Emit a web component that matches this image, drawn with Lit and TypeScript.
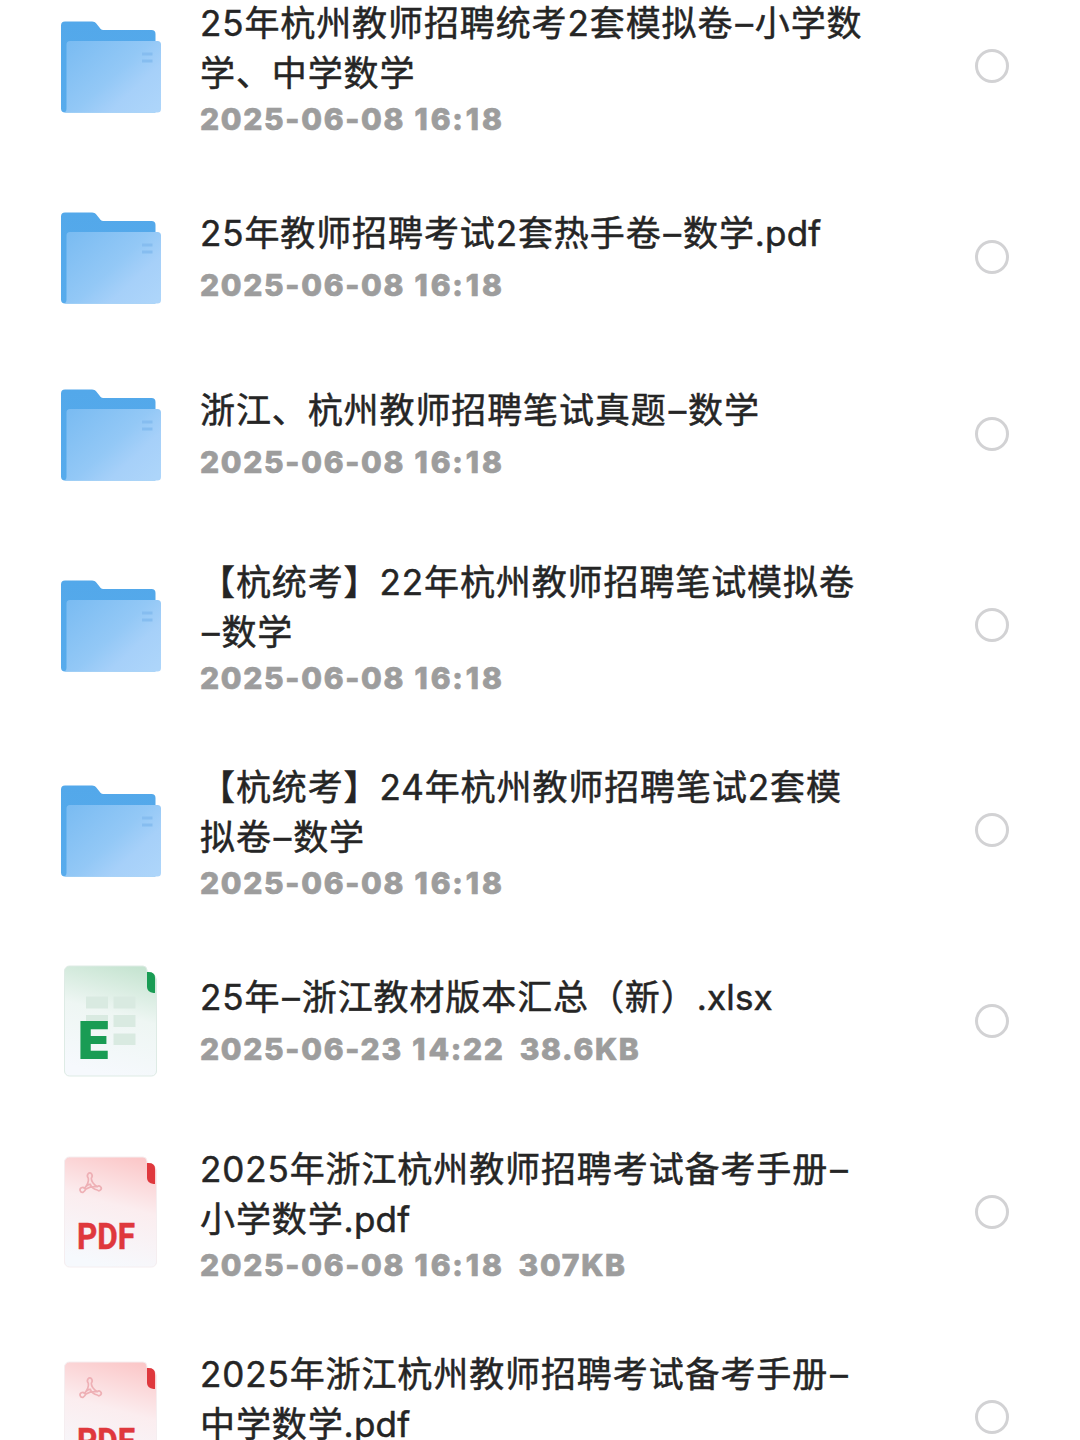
import { LitElement, html, svg, css } from "lit";
import { customElement, property } from "lit/decorators.js";

type Kind = "folder" | "sheet" | "pdf";

interface FileItem {
  kind: Kind;
  lines: string[];
  date: string;
  size?: string;
}

const FILES: FileItem[] = [
  { kind: "folder", lines: ["25年杭州教师招聘统考2套模拟卷–小学数", "学、中学数学"], date: "2025-06-08 16:18" },
  { kind: "folder", lines: ["25年教师招聘考试2套热手卷–数学.pdf"], date: "2025-06-08 16:18" },
  { kind: "folder", lines: ["浙江、杭州教师招聘笔试真题–数学"], date: "2025-06-08 16:18" },
  { kind: "folder", lines: ["【杭统考】22年杭州教师招聘笔试模拟卷", "–数学"], date: "2025-06-08 16:18" },
  { kind: "folder", lines: ["【杭统考】24年杭州教师招聘笔试2套模", "拟卷–数学"], date: "2025-06-08 16:18" },
  { kind: "sheet", lines: ["25年–浙江教材版本汇总（新）.xlsx"], date: "2025-06-23 14:22", size: "38.6KB" },
  { kind: "pdf", lines: ["2025年浙江杭州教师招聘考试备考手册–", "小学数学.pdf"], date: "2025-06-08 16:18", size: "307KB" },
  { kind: "pdf", lines: ["2025年浙江杭州教师招聘考试备考手册–", "中学数学.pdf"], date: "2025-06-08 16:18" },
];

@customElement("file-icon")
export class FileIcon extends LitElement {
  @property() kind: Kind = "folder";

  static styles = css`
    :host { display: block; width: 104px; height: 120px; }
    svg { display: block; }
    .pdf { font: 700 36px Roboto, sans-serif; fill: #df383d; stroke: #df383d; stroke-width: 0.5px; }
    .sheet { font: 900 52px Inter, sans-serif; fill: #199c54; }
  `;

  private folder() {
    return svg`
      <defs>
        <linearGradient id="front" x1="0" y1="0.1" x2="1" y2="0.9">
          <stop offset="0" stop-color="#7bbcf2" />
          <stop offset="0.5" stop-color="#93c8f6" />
          <stop offset="0.72" stop-color="#a6d0f9" />
          <stop offset="1" stop-color="#add5fa" />
        </linearGradient>
        <linearGradient id="back" x1="0" y1="0" x2="0" y2="1">
          <stop offset="0" stop-color="#53a8ea" />
          <stop offset="1" stop-color="#57abec" />
        </linearGradient>
      </defs>
      <path fill="url(#back)" d="M5 15.500h27c2 0 3.300.8 4.500 2.200l4.200 5.300q1 1 2.500 1h48.300a4 4 0 0 1 4 4V106.500H5a4 4 0 0 1-4-4V19.500a4 4 0 0 1 4-4z" />
      <path fill="url(#front)" d="M10 35h87.500a3.500 3.500 0 0 1 3.500 3.500v64.500a3.500 3.500 0 0 1-3.500 3.500H4.500q2-.5 2-3.500V38.500A3.500 3.500 0 0 1 10 35z" />
      <path fill="#86bdf0" d="M82 46.500h10.500v3H82zM82 53.500h10.500v3H82z" />`;
  }

  private page(tint: string, base: string, edge: string, tab: string) {
    return svg`
      <defs>
        <linearGradient id="paper" x1="0.72" y1="0" x2="0.5" y2="1">
          <stop offset="0" stop-color=${tint} />
          <stop offset="0.45" stop-color=${base} />
          <stop offset="1" stop-color="#f6f9fd" />
        </linearGradient>
      </defs>
      <path fill="url(#paper)" stroke=${edge} d="M9.500 5H83q3.500 0 4 4v2q8.500 1 9.500 8V110a5 5 0 0 1-5 5H9.500a5 5 0 0 1-5-5V10a5 5 0 0 1 5-5z" />
      <path fill=${tab} d="M87 11h1.500q6.500 0 6.500 5.500V32h-1.500q-6.500-1-6.500-6z" />`;
  }

  private sheet() {
    return svg`
      ${this.page("#c6e4d1", "#eef6f3", "#deebe5", "#199c54")}
      <path fill="#d9eae1" d="M26 35.500h22v12H26zM53.500 35.500h22v12h-22zM26 54h22v6H26zM53.500 54h22v12h-22zM53.500 72.500h22v11.500h-22z" />
      <text class="sheet" x="18" y="98" textLength="32" lengthAdjust="spacingAndGlyphs">E</text>`;
  }

  private pdf() {
    return svg`
      ${this.page("#fbc8c9", "#fbedef", "#f5eef0", "#df383d")}
      <path fill="none" stroke="#eeb0b5" stroke-width="1.700" stroke-linejoin="round" stroke-linecap="round"
        d="M28.300 26.200a2.300 3 0 1 1 3 0M28.300 26.200q1 4-3.800 10.200M31.300 26.200q0 4.500 6 8.500M24.500 36.400a2.500 2.500 0 1 0-1.500 4q2-1.500 3-3.500q5-3 11-2.200M37.300 34.700a2.300 2.300 0 1 1 0 3.300q-5-1-7-5.500M24.500 36.400q3-4.500 6-4" />
      <text class="pdf" x="17" y="97" textLength="58" lengthAdjust="spacingAndGlyphs">PDF</text>`;
  }

  render() {
    const art = this.kind === "folder" ? this.folder() : this.kind === "sheet" ? this.sheet() : this.pdf();
    return html`<svg width="104" height="120" viewBox="0 0 104 120">${art}</svg>`;
  }
}

@customElement("app-root")
export class AppRoot extends LitElement {
  static styles = css`
    :host { display: block; height: 1440px; overflow: hidden; background: #fff; }
    .list { display: flex; flex-direction: column; margin-top: -37px; }
    .row {
      display: grid;
      grid-template-columns: 104px 1fr 34px;
      column-gap: 36px;
      align-items: center;
      box-sizing: border-box;
      height: 177px;
      flex: none;
      padding: 0 71px 0 60px;
    }
    .row.tall { height: 205px; }
    .text { align-self: start; padding-top: 40px; }
    .tall .text { padding-top: 35px; }
    .title {
      font: 400 35px/50px Inter, "Noto Sans CJK SC", sans-serif;
      letter-spacing: 0.9px;
      color: #252525;
      white-space: nowrap;
      -webkit-text-stroke: 0.5px #252525;
    }
    .line { display: block; }
    .dash { margin: 0 1px 0 2px; }
    .ext { letter-spacing: 0.2px; }
    .meta {
      display: flex;
      gap: 15px;
      margin-top: 6px;
      font: 800 30px/42px Inter, sans-serif;
      letter-spacing: 1.7px;
      color: #9d9d9d;
      -webkit-text-stroke: 0.7px #9d9d9d;
      white-space: nowrap;
    }
    .one { margin: 0 1.2px; }
    .tall .meta { margin-top: 0; }
    .check {
      box-sizing: border-box;
      width: 34px;
      height: 34px;
      border: 3px solid #d2d2d4;
      border-radius: 50%;
    }
  `;

  private line(text: string) {
    const [name, ext] = text.split(".");
    const parts = name.split("–");
    return html`<span class="line">${parts.map((p, i) => (i ? html`<span class="dash">–</span>${p}` : p))}${ext ? html`<span class="ext">.${ext}</span>` : ""}</span>`;
  }

  private stamp(text: string) {
    return html`<span>${text.split("1").map((p, i) => (i ? html`<span class="one">1</span>${p}` : p))}</span>`;
  }

  render() {
    return html`<div class="list">
      ${FILES.map(
        (f) => html`<div class="row ${f.lines.length > 1 ? "tall" : ""}">
          <file-icon .kind=${f.kind}></file-icon>
          <div class="text">
            <div class="title">${f.lines.map((l) => this.line(l))}</div>
            <div class="meta">${this.stamp(f.date)}${f.size ? html`<span>${f.size}</span>` : ""}</div>
          </div>
          <div class="check"></div>
        </div>`
      )}
    </div>`;
  }
}
